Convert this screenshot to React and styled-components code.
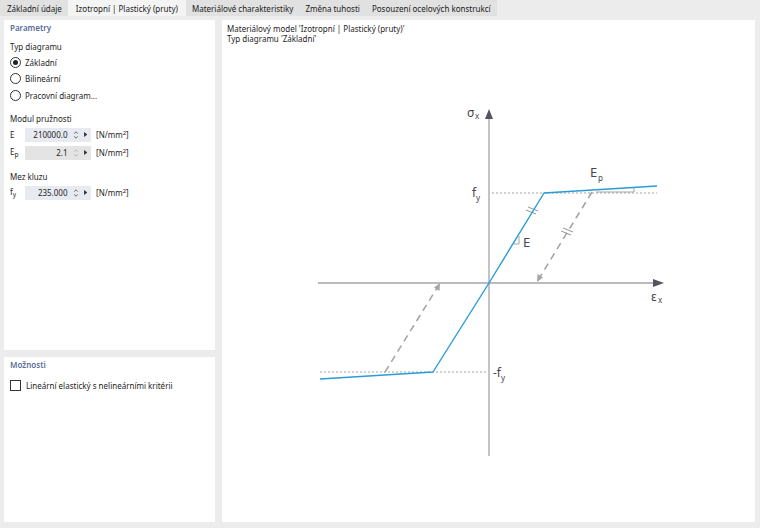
import React from "react";
import styled, { createGlobalStyle } from "styled-components";

const Global = createGlobalStyle`
  html, body {
    margin: 0;
    padding: 0;
    background: #ececec;
  }
  body {
    font-family: "Noto Sans", "Open Sans", sans-serif;
    font-size: 8px;
    color: #1e1e1e;
  }
`;

const tabs = [
  "Základní údaje",
  "Izotropní | Plastický (pruty)",
  "Materiálové charakteristiky",
  "Změna tuhosti",
  "Posouzení ocelových konstrukcí",
];

const App = () => {
  return (
    <Page>
      <Global />
      <TabBar>
        {tabs.map((t, i) => (
          <Tab key={t} active={i === 1}>
            {t}
          </Tab>
        ))}
      </TabBar>
      <Body>
        <LeftColumn>
          <Panel grow={false}>
            <Title>Parametry</Title>
            <GroupLabel>Typ diagramu</GroupLabel>
            <Radio checked label="Základní" />
            <Radio label="Bilineární" />
            <Radio label="Pracovní diagram..." />

            <GroupLabel spaced>Modul pružnosti</GroupLabel>
            <Field label="E" value="210000.0" />
            <Field label="E" sub="p" value="2.1" disabled />

            <GroupLabel spaced>Mez kluzu</GroupLabel>
            <Field label="f" sub="y" value="235.000" />
          </Panel>
          <Panel grow>
            <Title>Možnosti</Title>
            <CheckRow>
              <CheckBox />
              <span>Lineární elastický s nelineárními kritérii</span>
            </CheckRow>
          </Panel>
        </LeftColumn>
        <ChartPanel>
          <ChartHeader>
            <div>Materiálový model 'Izotropní | Plastický (pruty)'</div>
            <div>Typ diagramu 'Základní'</div>
          </ChartHeader>
          <Diagram />
        </ChartPanel>
      </Body>
    </Page>
  );
};

const Radio = ({ checked, label }) => (
  <RadioRow>
    <RadioCircle>{checked && <RadioDot />}</RadioCircle>
    <span>{label}</span>
  </RadioRow>
);

const Field = ({ label, sub, value, disabled }) => (
  <FieldRow>
    <FieldLabel>
      {label}
      {sub && <sub>{sub}</sub>}
    </FieldLabel>
    <InputBox disabled={disabled}>
      <InputValue>{value}</InputValue>
      <Spin viewBox="0 0 6 10" width="6" height="10" faded={disabled}>
        <path d="M1.2 3.6 L3 1.8 L4.8 3.6 M1.2 6.4 L3 8.2 L4.8 6.4" />
      </Spin>
      <Play viewBox="0 0 4 6" width="3.5" height="5">
        <path d="M0 0 L4 3 L0 6 Z" />
      </Play>
    </InputBox>
    <Unit>
      [N/mm<sup>2</sup>]
    </Unit>
  </FieldRow>
);

const Diagram = () => {
  const axis = "#a3a3ab";
  const dash = "#a6a6a6";
  const head = "#55555f";
  const blue = "#2a9bd8";
  const txt = "#45454d";
  return (
    <ChartSvg viewBox="222 52 533 470" preserveAspectRatio="xMinYMin meet">
      {/* axes */}
      <line x1="318" y1="283" x2="655" y2="283" stroke={axis} strokeWidth="1.3" />
      <polygon points="664,283 653,279 653,287" fill={head} />
      <line x1="489" y1="456" x2="489" y2="117" stroke={axis} strokeWidth="1.3" />
      <polygon points="489,109 485,119 493,119" fill={head} />

      {/* dotted yield lines */}
      <line x1="492" y1="193" x2="657" y2="193" stroke="#9a9a9a" strokeWidth="0.9" strokeDasharray="2 2" />
      <line x1="320" y1="372" x2="487" y2="372" stroke="#9a9a9a" strokeWidth="0.9" strokeDasharray="2 2" />

      {/* unloading paths */}
      <line x1="592" y1="192" x2="540" y2="277" stroke={dash} strokeWidth="1.6" strokeDasharray="7 5" />
      <polygon points="537,282 537.5,274 543,277.5" fill={dash} />
      <line x1="385" y1="372" x2="437" y2="288" stroke={dash} strokeWidth="1.6" strokeDasharray="7 5" />
      <polygon points="440,283 439.5,291 434,287.5" fill={dash} />

      {/* hatch marks */}
      <g stroke="#8a8a8a" strokeWidth="0.9">
        <line x1="526" y1="210" x2="536" y2="214" />
        <line x1="528" y1="207" x2="538" y2="211" />
        <line x1="561" y1="231" x2="571" y2="235" />
        <line x1="563" y1="228" x2="573" y2="232" />
      </g>

      {/* slope markers */}
      <g stroke="#9a9a9a" strokeWidth="0.9" fill="none">
        <polyline points="519,236 519,244 514,244" />
        <polyline points="596,192 634,192 634,188" />
      </g>

      {/* material curve */}
      <polyline
        points="320,379 433,372 489,283 544,193 657,186"
        fill="none"
        stroke={blue}
        strokeWidth="1.4"
        strokeLinejoin="round"
      />

      {/* labels */}
      <g fill={txt} fontFamily="'Noto Sans', sans-serif">
        <text x="467" y="117" fontSize="12">σ</text>
        <text x="475" y="119" fontSize="8">x</text>
        <text x="472" y="197" fontSize="12">f</text>
        <text x="476" y="201" fontSize="8">y</text>
        <text x="493" y="377" fontSize="12">-f</text>
        <text x="501" y="381" fontSize="8">y</text>
        <text x="523" y="247" fontSize="13">E</text>
        <text x="590" y="177" fontSize="13">E</text>
        <text x="598" y="181" fontSize="8">p</text>
        <text x="651" y="301" fontSize="12">ε</text>
        <text x="658" y="303" fontSize="8">x</text>
      </g>
    </ChartSvg>
  );
};

const Page = styled.div`
  width: 760px;
  height: 528px;
  display: flex;
  flex-direction: column;
  overflow: hidden;
`;

const TabBar = styled.div`
  height: 16px;
  display: flex;
  background: #ececec;
`;

const Tab = styled.div`
  display: flex;
  align-items: center;
  padding: 0 ${(p) => (p.active ? "8px" : "6px")};
  background: ${(p) => (p.active ? "#f4f4f4" : "#e1e1e1")};
  color: #1a1a1a;
  white-space: nowrap;
  font-size: 8px;
  &:first-child {
    padding-left: 7px;
  }
`;

const Body = styled.div`
  flex: 1;
  display: flex;
  gap: 7px;
  padding: 4px 5px 6px 4px;
  min-height: 0;
`;

const LeftColumn = styled.div`
  width: 211px;
  display: flex;
  flex-direction: column;
  gap: 7px;
`;

const Panel = styled.div`
  background: #fff;
  padding: 0 6px;
  box-sizing: border-box;
  height: ${(p) => (p.grow ? "auto" : "330px")};
  flex: ${(p) => (p.grow ? 1 : "none")};
`;

const Title = styled.div`
  height: 16px;
  line-height: 16px;
  color: #5b6d98;
  font-weight: 600;
`;

const GroupLabel = styled.div`
  height: 14px;
  line-height: 14px;
  margin-top: ${(p) => (p.spaced ? "8px" : "4px")};
`;

const RadioRow = styled.div`
  height: 16.5px;
  display: flex;
  align-items: center;
  gap: 4px;
`;

const RadioCircle = styled.span`
  width: 9px;
  height: 9px;
  border: 1px solid #333;
  border-radius: 50%;
  display: flex;
  align-items: center;
  justify-content: center;
  flex: none;
`;

const RadioDot = styled.span`
  width: 5px;
  height: 5px;
  border-radius: 50%;
  background: #222;
`;

const FieldRow = styled.div`
  height: 18px;
  display: flex;
  align-items: center;
  &:first-of-type {
    margin-top: 1px;
  }
`;

const FieldLabel = styled.div`
  width: 15px;
  sub {
    font-size: 6.5px;
    vertical-align: -2px;
  }
`;

const InputBox = styled.div`
  width: 66px;
  height: 14px;
  display: flex;
  align-items: center;
  background: ${(p) => (p.disabled ? "#e4e4e4" : "#e8eaf1")};
`;

const InputValue = styled.span`
  flex: 1;
  text-align: right;
  padding-right: 5px;
`;

const Spin = styled.svg`
  fill: none;
  stroke: ${(p) => (p.faded ? "#b5b5b5" : "#666")};
  stroke-width: 1;
  margin-right: 5px;
`;

const Play = styled.svg`
  fill: #333;
  margin-right: 4px;
`;

const Unit = styled.span`
  margin-left: 5px;
  sup {
    font-size: 6px;
    vertical-align: 3px;
  }
`;

const CheckRow = styled.div`
  display: flex;
  align-items: center;
  gap: 5px;
  margin-top: 7px;
`;

const CheckBox = styled.span`
  width: 9px;
  height: 9px;
  border: 1px solid #333;
  flex: none;
`;

const ChartPanel = styled.div`
  flex: 1;
  background: #fff;
  display: flex;
  flex-direction: column;
`;

const ChartHeader = styled.div`
  height: 32px;
  box-sizing: border-box;
  padding: 4px 5px 0;
  line-height: 10px;
`;

const ChartSvg = styled.svg`
  width: 533px;
  height: 470px;
  display: block;
`;

export default App;
